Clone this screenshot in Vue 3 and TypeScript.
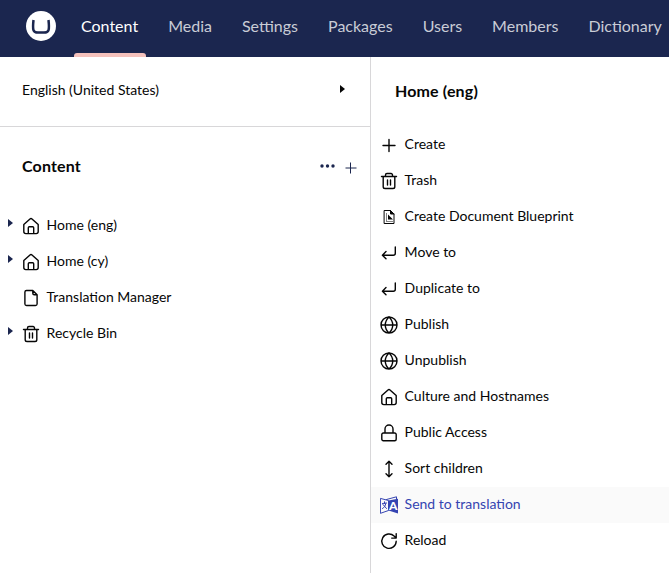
<script setup lang="ts">
type IconName =
  | 'plus' | 'trash' | 'blueprint' | 'enter' | 'globe' | 'home'
  | 'lock' | 'sort' | 'translate' | 'reload' | 'document'

interface Entry {
  label: string
  icon: IconName
  expandable?: boolean
  active?: boolean
}

const sections: string[] = ['Content', 'Media', 'Settings', 'Packages', 'Users', 'Members', 'Dictionary']

const tree: Entry[] = [
  { label: 'Home (eng)', icon: 'home', expandable: true },
  { label: 'Home (cy)', icon: 'home', expandable: true },
  { label: 'Translation Manager', icon: 'document' },
  { label: 'Recycle Bin', icon: 'trash', expandable: true },
]

const actions: Entry[] = [
  { label: 'Create', icon: 'plus' },
  { label: 'Trash', icon: 'trash' },
  { label: 'Create Document Blueprint', icon: 'blueprint' },
  { label: 'Move to', icon: 'enter' },
  { label: 'Duplicate to', icon: 'enter' },
  { label: 'Publish', icon: 'globe' },
  { label: 'Unpublish', icon: 'globe' },
  { label: 'Culture and Hostnames', icon: 'home' },
  { label: 'Public Access', icon: 'lock' },
  { label: 'Sort children', icon: 'sort' },
  { label: 'Send to translation', icon: 'translate', active: true },
  { label: 'Reload', icon: 'reload' },
]

// Stroke outlines on an 18 x 18 grid
const outlines: Record<IconName, string> = {
  plus: 'M9 3.500v12M3 9.500h12',
  trash: 'M1.500 4.500h15M3.200 4.500v10.200a1.800 1.800 0 0 0 1.800 1.800h8a1.800 1.800 0 0 0 1.800-1.800V4.500M5.500 4.500V3a1.500 1.500 0 0 1 1.500-1.500h4a1.500 1.500 0 0 1 1.500 1.500v1.500M7.500 8v5M10.500 8v5',
  blueprint: '',
  enter: 'M15.300 3v6.200a2 2 0 0 1-2 2H2.500M6 7.600l-3.600 3.600L6 14.800',
  globe: 'M17 9A8 8 0 1 1 1 9a8 8 0 0 1 16 0ZM1 9h16M9 1c-5 4.700-5 11.300 0 16M9 1c5 4.700 5 11.300 0 16',
  home: 'M1.800 7.600 8 1.900a1.500 1.500 0 0 1 2 0l6.200 5.700v7a2 2 0 0 1-2 2H3.800a2 2 0 0 1-2-2ZM6.300 16.500v-5.700a1 1 0 0 1 1-1h3.400a1 1 0 0 1 1 1v5.700',
  lock: 'M3.300 9h11.400a1.500 1.500 0 0 1 1.500 1.500v4.700a1.500 1.500 0 0 1-1.500 1.500H3.300a1.500 1.500 0 0 1-1.500-1.500v-4.700A1.500 1.500 0 0 1 3.300 9ZM5 9V5a4 4 0 0 1 8 0v4',
  sort: 'M9 1.200v15.600M6 4.200l3-3 3 3M6 13.800l3 3 3-3',
  translate: '',
  reload: 'M16.200 9.200a7.200 7.200 0 1 1-2.100-5.100l2.100 2M16.200 1.600v4.500h-4.500',
  document: 'M10.800 1.500H4.500A1.600 1.600 0 0 0 2.900 3v12a1.600 1.600 0 0 0 1.600 1.500h9a1.600 1.600 0 0 0 1.600-1.500V5.800ZM10.800 1.500v2.800a1.500 1.500 0 0 0 1.500 1.500h2.800',
}
</script>

<template>
  <div class="app">
    <header class="topbar">
      <svg class="logo" viewBox="0 0 30 30">
        <circle cx="15" cy="15" r="15" />
        <path d="M7.500 9C6.400 19 7 21.600 12 21.600h6c5 0 5.600-2.600 4.500-12.600" />
      </svg>
      <nav class="sections">
        <a v-for="(s, i) in sections" :key="s" class="section" :class="{ current: i === 0 }">{{ s }}</a>
      </nav>
    </header>

    <div class="body">
      <aside class="sidebar">
        <div class="language">
          <span>English (United States)</span>
          <svg class="caret" viewBox="0 0 5 8"><path d="M0 0l5 4-5 4z" /></svg>
        </div>
        <div class="tree-head">
          <h2>Content</h2>
          <svg class="dots" viewBox="0 0 15 4"><circle cx="2" cy="2" r="1.700" /><circle cx="7.500" cy="2" r="1.700" /><circle cx="13" cy="2" r="1.700" /></svg>
          <svg class="add" viewBox="0 0 12 12"><path d="M5.500 .5v11M.5 6h11" /></svg>
        </div>
        <ul class="tree">
          <li v-for="n in tree" :key="n.label">
            <span class="toggle"><svg v-if="n.expandable" class="caret" viewBox="0 0 5 8"><path d="M0 0l5 4-5 4z" /></svg></span>
            <svg class="icon" viewBox="0 0 18 18"><path :d="outlines[n.icon]" /></svg>
            <span>{{ n.label }}</span>
          </li>
        </ul>
      </aside>

      <section class="panel">
        <h2>Home (eng)</h2>
        <ul class="actions">
          <li v-for="a in actions" :key="a.label" :class="{ active: a.active }">
            <svg v-if="a.icon === 'blueprint'" class="icon" viewBox="0 0 18 18">
              <path class="fine" d="M4.500 2.500h6l3.500 3.500v9.500H4.500ZM10.500 2.500v3.500h3.500" />
              <path class="dotted" d="M6.500 5.500v8h6.500" />
              <path class="solid" d="M8 6.500l5 5H8zM10.500 2.500l3.500 3.500h-3.500z" />
            </svg>
            <svg v-else-if="a.icon === 'translate'" class="icon" viewBox="0 0 18 18">
              <path class="fine" d="M.8 2.500 8.500 4.500v10L.8 17.200ZM6.500 3.500 16.500.8v2.700" />
              <path class="fine" d="M2.500 7.500l4-.5M4.500 5.800v1.700M5.800 7.500c-.5 2.500-1.500 4-3.300 5M3 8.500l3.500 4" />
              <path class="solid" d="M8.500 4.500 18 2.800v14.700L8.500 14.500z" />
              <text x="13.200" y="14">A</text>
            </svg>
            <svg v-else class="icon" viewBox="0 0 18 18"><path :d="outlines[a.icon]" /></svg>
            <span>{{ a.label }}</span>
          </li>
        </ul>
      </section>
    </div>
  </div>
</template>

<style>
body { margin: 0; overflow: hidden; }
</style>

<style scoped>
.app {
  width: 669px;
  height: 573px;
  overflow: hidden;
  display: flex;
  flex-direction: column;
  background: #fff;
  color: #060606;
  font: 14px/20px Lato, "Liberation Sans", sans-serif;
}
svg { display: block; flex: none; }
ul { list-style: none; margin: 0; padding: 0; }
h2 { margin: 0; font-size: 16px; line-height: 20px; font-weight: 700; letter-spacing: 0.15px; }
.topbar {
  flex: none;
  display: flex;
  align-items: flex-start;
  height: 57px;
  padding-left: 26px;
  background: #1b264f;
}
.logo { width: 30px; height: 30px; margin-top: 11px; fill: #fff; }
.logo path { fill: none; stroke: #1b264f; stroke-width: 2.5; }
.sections { display: flex; margin-left: 18px; gap: 15px; height: 57px; }
.section {
  box-sizing: border-box;
  padding: 15px 7.5px 0;
  font-size: 16px;
  line-height: 21px;
  color: #c9ccd6;
  white-space: nowrap;
}
.section.current {
  display: flex;
  flex-direction: column;
  justify-content: space-between;
  color: #fff;
  text-indent: -0.5px;
}
.section.current::after {
  content: "";
  height: 4px;
  margin: 0 -7.5px;
  border-radius: 3px 3px 0 0;
  background: #f5c1bc;
}
.body { flex: 1; display: flex; }
.sidebar { width: 370px; border-right: 1px solid #d8d7d9; }
.language {
  box-sizing: border-box;
  height: 70px;
  padding: 0 25px 4px 22px;
  display: flex;
  align-items: center;
  justify-content: space-between;
  border-bottom: 1px solid #d8d7d9;
}
.caret { width: 5px; height: 8px; fill: currentColor; }
.language .caret { margin-bottom: 2px; }
.tree-head { display: flex; align-items: center; padding: 29px 13px 0 22px; }
.tree-head h2 { flex: 1; }
.dots { width: 15px; height: 4px; fill: #1b264f; margin-bottom: 1px; }
.add { width: 12px; height: 12px; margin: 3px 0 0 10px; fill: none; stroke: #1b264f; }
.tree { padding-top: 31px; }
.tree li { display: flex; align-items: center; height: 36px; }
.toggle { width: 14px; padding-left: 8px; color: #1b264f; margin-bottom: 4px; }
.icon {
  width: 18px;
  height: 18px;
  margin: 2px 7px 0 0;
  fill: none;
  stroke: currentColor;
  stroke-width: 1.4;
  stroke-linecap: round;
  stroke-linejoin: round;
}
.fine { stroke-width: 1; }
.dotted { stroke-width: 1; stroke-dasharray: 1 1; stroke-linecap: butt; }
.solid { fill: currentColor; stroke: none; }
.icon text { fill: #fff; stroke: none; font: 900 12px Lato, sans-serif; text-anchor: middle; }
.panel { flex: 1; }
.panel h2 { padding: 24px 0 0 24px; }
.actions { padding-top: 26px; }
.actions li { display: flex; align-items: center; height: 36px; padding-left: 9px; }
.actions .icon { margin-top: 0; }
.actions span { margin: 0 0 2px -0.4px; }
.tree li > span:last-child { margin-left: -0.4px; }
.actions .active { background: #fafafa; color: #3544b1; }
</style>
